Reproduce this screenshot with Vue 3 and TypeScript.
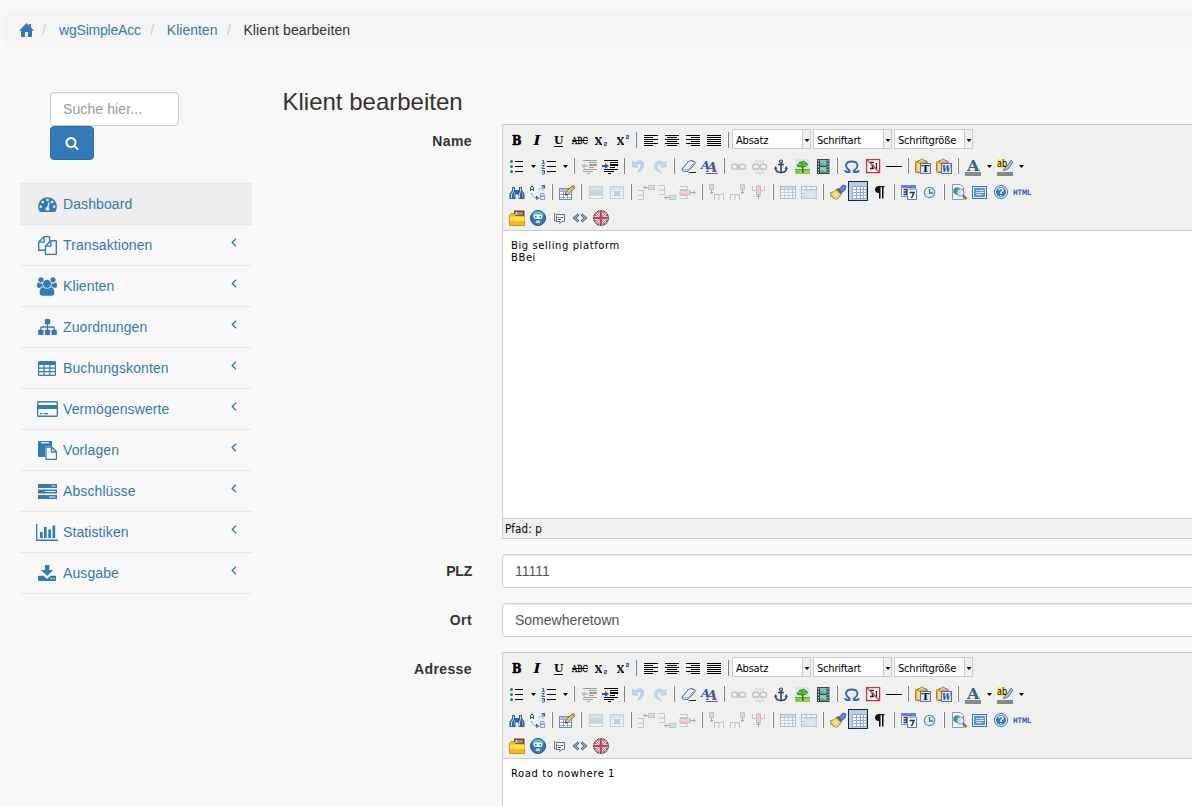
<script setup lang="ts">
type ToolKind = 'button' | 'split' | 'separator' | 'list'

interface Tool {
  kind: ToolKind
  icon: string
  label: string
  active: boolean
}

interface MenuItem {
  label: string
  icon: string
  viewBox: string
  width: number
  height: number
}

const lines = (rows: number[][], fill = '#000'): string =>
  rows.map(([x, y, w]) => `<rect x="${x}" y="${y}" width="${w}" height="1" fill="${fill}"/>`).join('')

const glyph = (text: string, x: number, y: number, size: number, extra = ''): string =>
  `<text x="${x}" y="${y}" font-size="${size}" font-family="DejaVu Serif, serif" font-weight="700" ${extra}>${text}</text>`

const stretched = (width: number): string => `textLength="${width}" lengthAdjust="spacingAndGlyphs"`

const cross = (x: number): string =>
  `<path d="M${x} 8.500h2.500M${x + 4.500} 8.500h2.500M${x} 15.500h2.500M${x + 4.500} 15.500h2.500" stroke="#111"/><path d="M${x + 1} 8.500l5 7" stroke="#111" stroke-width="2"/><path d="M${x + 6} 8.500l-5 7" stroke="#333" stroke-width="1.200"/>`

const smallTwo = (x: number, y: number): string =>
  `<path d="M${x} ${y + 0.5}h2.500v1.500h-2v1.500h2.500" fill="none" stroke="#3a66c8" stroke-width="1.100"/>`

const tableGrid = (x: number, y: number, w: number, h: number): string =>
  `<g shape-rendering="crispEdges"><rect x="${x + 0.5}" y="${y + 0.5}" width="${w - 1}" height="${h - 1}" fill="#fff" stroke="#6f8cb8"/><rect x="${x + 1}" y="${y + 1}" width="${w - 2}" height="2" fill="#b7cbe8"/><path d="M${x + 4.5} ${y + 1}v${h - 2}M${x + 8.5} ${y + 1}v${h - 2}M${x + 1} ${y + 3.5}h${w - 2}M${x + 1} ${y + 6.5}h${w - 2}M${x + 1} ${y + 9.5}h${w - 2}" stroke="#93abd2" fill="none"/></g>`

const clipboard = '<rect x="3.500" y="6.500" width="12" height="11" rx="1" fill="#dfb24d" stroke="#a97d2a"/><path d="M5 8h3v8H5z" fill="#f6d98d"/><path d="M6 8V5.500h2L9 4h2l1 1.500h2V8z" fill="#e8c56d" stroke="#8c6a2b" stroke-width=".7"/><rect x="8.500" y="8.500" width="10" height="10" fill="#dfe8fb" stroke="#5b6f9c"/>'

const chain = '<g fill="none" stroke="#8f98a8" stroke-width="1.600"><rect x="3.700" y="9.200" width="6.500" height="5" rx="2.200"/><rect x="11" y="9.200" width="6.500" height="5" rx="2.200"/>'

const indentLines = lines([[5, 5, 14], [11, 7, 8], [11, 9, 8], [11, 10, 8], [11, 12, 5], [5, 14, 14], [5, 16, 10], [9, 18, 3]])

const icons: Record<string, string> = {
  bold: glyph('B', 6, 16, 12, `${stretched(9.5)} stroke="#000" stroke-width=".5"`),
  italic: glyph('I', 6.5, 16, 12, `${stretched(7)} font-style="italic"`),
  underline: glyph('U', 6, 15, 11, stretched(9.5)) + lines([[6, 17, 9]]),
  strike: glyph('ABC', 3, 15, 9.5, `${stretched(16)} style="font-weight:400" stroke="#000" stroke-width=".3"`) + lines([[3, 11, 16]]),
  sub: cross(5) + smallTwo(14, 13),
  sup: cross(6) + smallTwo(15, 6),
  left: lines([[4, 6, 14], [4, 8, 9], [4, 10, 14], [4, 12, 9], [4, 14, 14], [4, 16, 9]]),
  center: lines([[4, 6, 14], [6, 8, 10], [4, 10, 14], [6, 12, 10], [4, 14, 14], [6, 16, 10]]),
  right: lines([[4, 6, 14], [9, 8, 9], [4, 10, 14], [9, 12, 9], [4, 14, 14], [9, 16, 9]]),
  full: lines([[4, 6, 14], [4, 8, 14], [4, 10, 14], [4, 12, 14], [4, 14, 14], [4, 16, 14]]),
  bullets: '<g fill="#3c64a8"><circle cx="5.500" cy="6.500" r="1.500"/><circle cx="5.500" cy="11.500" r="1.500"/><circle cx="5.500" cy="16.500" r="1.500"/></g>' + lines([[9, 6, 8], [9, 11, 8], [9, 16, 8]]),
  numbers: '<path d="M4 5.500h1.500V8M4 8.500h3M4 10.500h2.500L4 13.500h3M4 15.500h2.500v3.500H4M4.500 17h2" fill="none" stroke="#3a66b8"/>' + lines([[9, 6, 9], [9, 11, 9], [9, 16, 9]]),
  outdent: `<g opacity=".35">${indentLines}<path d="M3 11l4-3v2h3v2H7v2z" fill="#3a76e0"/></g>`,
  indent: indentLines + '<path d="M10 11L6 8v2H3v2h3v2z" fill="#2c5cc0"/>',
  undo: '<path d="M4.500 6v6h5.500l-2-2c3-3 7 0 4 3l-2.500 4.500C18 14 17 4.500 10.500 6Q8.500 6.500 6.700 8z" fill="#bdcee9" stroke="#a8bde0" stroke-width=".6"/>',
  redo: '<path d="M17 6v6h-5.500l2-2c-4-2.500-8 1-3 6l2 1.500C4 16 3 8 9.500 6.200Q12.500 5.700 15 8z" fill="#c6d5ee" stroke="#a8bde0" stroke-width=".6"/>',
  eraser: '<path d="M4 14l6.500-7.500q1-1 2.500-.8l3.500.8q1.500.7.500 2L11 15.500q-1 1-2.500 1l-3-.3Q3.500 16 4 14z" fill="#f4f8ff" stroke="#41608f"/><path d="M4.500 14l5.500.8 6.500-7.500M10 14.800l-.5 1.500" fill="none" stroke="#7d99c4" stroke-width=".8"/>' + lines([[11, 17, 7]], '#222'),
  styles: glyph('A', 2, 14, 11, `${stretched(9)} font-style="italic" fill="#2a5db0"`) + glyph('A', 7.5, 17, 13, `${stretched(11)} font-style="italic" fill="#3c5fa8"`) + lines([[7, 18, 12]], '#9a3fa5'),
  link: `<g opacity=".5">${chain}<path d="M8 11.700h5"/></g></g>`,
  unlink: `<g opacity=".5">${chain}<path d="M7 5l2 3M11 4v3M15 5l-2 3M7 19l2-3M11 20v-3M15 19l-2-3" stroke-width="1"/></g></g>`,
  anchor: '<g fill="none" stroke="#27466f" stroke-width="1.600"><circle cx="11" cy="6.500" r="1.500" stroke-width="1.200"/><path d="M11 8v9.500M8 9.500h6M5.500 13q0 4.500 5.500 4.500t5.500-4.500"/></g><path d="M4.300 14l1-3 2.300 2.500zM17.700 14l-1-3-2.300 2.500z" fill="#27466f"/>',
  image: '<rect x="4" y="4" width="15" height="15" fill="#c9ebfb"/><rect x="4" y="14" width="15" height="5" fill="#8ed24b"/><path d="M4 14.500h15M5 17h4" stroke="#5aa72d"/><path d="M11 18v-6h1.500v6z" fill="#7a4319"/><path d="M6.500 11.500q-1-2.500 1.500-2.500 0-3 2.500-2 3-2 3.500.5 2.500 0 2.500 2.500-1 2.500-3.500 1.500-2.500 2-4 0-2 1-2.500 0z" fill="#4ea426" stroke="#2b7914" stroke-width=".6"/><path d="M8 9h2v1H8zM12 7.500h1.500v1H12zM13.500 10h2v1h-2z" fill="#b3e65b"/>',
  media: '<rect x="5" y="4" width="12.500" height="15" fill="#37424b"/><path d="M6.500 5v13M16 5v13" stroke="#dfe4e8" stroke-dasharray="1.500 1.500"/><rect x="8" y="5" width="6.500" height="6" fill="#7fbde8"/><rect x="8" y="12" width="6.500" height="6" fill="#8ac5e8"/><path d="M8 9q2-2 3.500 0t3-1v3H8zM8 16q2-2 3.500 0t3-1v3H8z" fill="#5fb04a"/>',
  omega: '<path d="M4.500 17h4v-1.500C2.500 11 5 6.500 10.700 6.500S19 11 13 15.500V17h4.500M4.500 17v-2M17.500 17v-2" fill="none" stroke="#3666b5" stroke-width="1.900"/>',
  nonbreaking: '<rect x="4.600" y="4.600" width="13" height="13" fill="#fff" stroke="#bd3844" stroke-width="1.300"/><path d="M8 7.500h4M8 13.500h4M14.500 8v5.500H13M9.500 11h3M10.500 9.300v3.400" fill="none" stroke="#222" stroke-width="1.300"/><path d="M5 5l12 12" stroke="#d7404a" stroke-width="1.100"/>',
  rule: lines([[3, 11, 16]]),
  pastetext: clipboard + glyph('T', 9.5, 17, 9.5, `${stretched(8)} fill="#14161c"`),
  pasteword: clipboard + glyph('W', 9, 17, 8.5, `${stretched(9)} font-style="italic" fill="#2352b0"`),
  forecolor: glyph('A', 5, 16, 14, `${stretched(12.5)} fill="#3b5d96"`) + '<rect x="3" y="17" width="16" height="4" fill="#888"/>',
  backcolor: '<rect x="3" y="4" width="9" height="9" fill="#f3ef60"/><text x="3" y="12" font-size="10" font-family="DejaVu Sans, sans-serif" textLength="10" lengthAdjust="spacingAndGlyphs">ab</text><path d="M9 15l3.500-3.500L17 5.500l2 1.500-5 7-3.500 1.500z" fill="#a9c1e4" stroke="#4d6897" stroke-width=".9"/><rect x="3" y="17" width="16" height="4" fill="#888"/>',
  search: '<path d="M6 6h3v3h4V6h3v3l2.500 4v5h-6v-4.500h-3V18h-6v-5L6 9z" fill="#34619f"/><path d="M7.500 7v3l-2 3v4M14.500 7v3l-1 3v4" fill="none" stroke="#bcd4f4"/><path d="M8.500 11v5M16.500 12v4" stroke="#7fa4d8"/>',
  replace: '<path d="M3.500 10V7l1.500-2.500L6.500 7v3M4 8.500h3" fill="none" stroke="#34507a"/><path d="M13.500 12.500H17v2.700h-3.500 4v3.300h-4z" fill="none" stroke="#76a0eb"/><path d="M4.500 12.500q.5 4 5 4.500M12 8.500q2-1 4-2.500v4" fill="none" stroke="#2e66d4" stroke-dasharray="1.500 1.300"/><path d="M9 14.500l3.500 2.500L9 19zM14 4h4v4z" fill="#2e66d4"/>',
  table: tableGrid(3, 7, 13, 12) + '<path d="M9 14l1-3 6-6 2.500 2-6.500 6.500z" fill="#f0c75e" stroke="#6d4e29" stroke-width=".8"/><path d="M15.500 5.500l1.500-1.500 2.300 1.700L18 7.500z" fill="#d27164"/><path d="M9 14.500l1-2 1.300 1.200z" fill="#222"/>',
  rowprops: '<g opacity=".3"><rect x="4.500" y="5.500" width="13" height="12" fill="#fff" stroke="#7188ae"/><path d="M5 6h12v3H5z" fill="#a4bde5"/><path d="M5 10h12v4H5z" fill="#6f96d8"/><path d="M5 9.500h12M5 14.500h12" stroke="#8ca4c9"/></g>',
  cellprops: '<g opacity=".3"><rect x="4.500" y="5.500" width="13" height="12" fill="#fff" stroke="#7188ae"/><path d="M5 6h12v3H5z" fill="#a4bde5"/><path d="M8.500 9v9M13.500 9v9M5 10.500h12M5 14.500h12" stroke="#a9bbd8"/><path d="M8 10h6v5H8z" fill="#4f7fd0"/></g>',
  rowbefore: '<g opacity=".42" fill="#f3f6fc" stroke="#7589a8"><path d="M3 9.500h5.500v9H3M3 14h5.500"/><rect x="13.500" y="4.500" width="6" height="4" fill="#a8c0ea"/><path d="M8 6.500h5M10 4.500v4" stroke="#555"/></g>',
  rowafter: '<g opacity=".42" fill="#f3f6fc" stroke="#7589a8"><path d="M3 4.500h5.500v9H3M3 9h5.500"/><rect x="13.500" y="14.500" width="6" height="4" fill="#a8c0ea"/><path d="M8 16.500h5M10 14.500v4" stroke="#555"/></g>',
  delrow: '<g opacity=".4" fill="#f3f6fc" stroke="#7589a8"><path d="M3 5.500h7.500v3H3M3 14.500h7.500v3H3"/><path d="M3 9.500h10.500v4H3z" fill="#eea2a2" stroke="#ba6060"/><path d="M13 11.500h5M16 9.500l2.500 2-2.500 2" stroke="#444" fill="none"/></g>',
  colbefore: '<g opacity=".42" fill="#f3f6fc" stroke="#7589a8"><rect x="3.500" y="3.500" width="4" height="5" fill="#a8c0ea"/><path d="M5.500 9v4M4 11.500h3" stroke="#444"/><path d="M8.500 19v-5.500h9V19M13 14v5"/></g>',
  colafter: '<g opacity=".42" fill="#f3f6fc" stroke="#7589a8"><rect x="13.500" y="3.500" width="4" height="5" fill="#a8c0ea"/><path d="M15.500 9v4M14 11.500h3" stroke="#444"/><path d="M3.500 19v-5.500h9V19M8 14v5"/></g>',
  delcol: '<g opacity=".42" fill="#f3f6fc" stroke="#7589a8"><path d="M4.500 5v4.500h12V5"/><path d="M8.500 5v8.500h4V5z" fill="#eaa3a3" stroke="#ba6060"/><path d="M10.500 13v5M8.500 15.500h4" stroke="#444"/></g>',
  splitcells: `<g opacity=".5">${tableGrid(3, 5, 16, 13)}<path d="M15.500 6v11" stroke="#7c98c4"/></g>`,
  mergecells: '<g opacity=".5"><rect x="3.500" y="5.500" width="15" height="12" fill="#fff" stroke="#6f8cb8"/><path d="M4 8.500h14M8.500 6v3M13.500 6v3M4 12.500h3M4 15.500h3" stroke="#7c98c4"/><path d="M6.500 9.500H18v7.500H6.500z" fill="#cbdcf5" stroke="#a6bde4"/></g>',
  cleanup: '<path d="M12 8l4-4 3 1-1 4-3.500 2.500z" fill="#648bcd" stroke="#334f87" stroke-width=".8"/><path d="M11 7l4.500 4.500-1.500 2-5-5z" fill="#6d604d"/><path d="M3.500 11.500Q7 11.500 9 8.500l5 5Q12.500 16.500 9.500 18.500 8 18 7.500 17l-1 .5-1-2-1.500.2z" fill="#ead873" stroke="#8a7432" stroke-width=".8"/><path d="M6 13.500l3-2M8 16l2.500-3" stroke="#fff6bb"/>',
  visualaid: '<g shape-rendering="crispEdges"><rect x="4" y="5" width="15" height="13" fill="#fff"/><path d="M4.500 5.500h14v12h-14zM5 8.500h13M5 11.500h13M5 14.500h13M8.500 6v11M12.500 6v11M15.500 6v11" fill="none" stroke="#93aad0"/></g>',
  visualchars: '<path d="M15.500 5v1.300h-1V17.500H13V6.300h-1.500v11.200H10V12C4.500 12 5 5 10 5z" fill="#080808"/>',
  date: '<rect x="3.500" y="4.500" width="10" height="11" fill="#f8fbff" stroke="#7793c5"/><path d="M3 4h15v3H3z" fill="#5b86cf"/><path d="M5.500 8.500h3v5h-3M5.500 11h3" fill="none" stroke="#273d65" stroke-width="1.300"/><rect x="9.500" y="7.500" width="9" height="11" fill="#f8fbff" stroke="#6a84b0"/><path d="M9 7h10v2H9z" fill="#9db9e4"/><path d="M11.500 11.500h4.500l-2.500 5.500" fill="none" stroke="#252c3a" stroke-width="1.500"/>',
  time: '<circle cx="10.500" cy="11.500" r="5.200" fill="#dbe8fa" stroke="#6788bd" stroke-width="1.200"/><circle cx="9.500" cy="10" r="2.800" fill="#fff"/><path d="M10.500 8v4H14" fill="none" stroke="#3762a8" stroke-width="1.300"/>',
  preview: '<path d="M4.500 3.500h8l3 3v12h-11z" fill="#f5faff" stroke="#8299bb"/><circle cx="9" cy="10" r="3.700" fill="#469ec0"/><path d="M6 9q1-3 4-2l-2 3 1 3q-3 0-3-4z" fill="#3c9a48"/><circle cx="12.500" cy="11.500" r="3.700" fill="#d8e9f9" fill-opacity=".85" stroke="#7f8a9c"/><path d="M15 14.500l3.500 3.500" stroke="#a66e35" stroke-width="2.500"/>',
  fullscreen: '<rect x="3.500" y="5.500" width="14" height="12" fill="#e6effc" stroke="#426fb1"/><rect x="5" y="7" width="11" height="9" fill="#5f92e3"/><path d="M7 9.500h2M10 9.500h5M7 11.500h8M7 13.500h6" stroke="#d7e6fb"/>',
  help: '<circle cx="11" cy="11" r="6.500" fill="#edf4ff" stroke="#3d6cb5"/><circle cx="11" cy="11" r="5" fill="#3974d1"/><path d="M9 9.300Q9 7.500 11 7.500t2 1.800q0 1-2 2V13M11 14v1.300" fill="none" stroke="#fff" stroke-width="1.400"/>',
  html: '<text x="2" y="14" font-size="7.500" font-family="DejaVu Sans, sans-serif" font-weight="700" textLength="18" lengthAdjust="spacingAndGlyphs" fill="#315fae">HTML</text>',
  folder: '<path d="M8 3.500h10.500V11H8z" fill="#4e4c4a"/><path d="M12 5h5v3h-5z" fill="#c97a68"/><path d="M9.500 5h2v3h-2z" fill="#ddd"/><path d="M3.500 8.500l1.500-2h3.500l1 2.500h9v9.500h-15z" fill="#f3b91e" stroke="#bd7608" stroke-width=".7"/><path d="M4 9.500h14.500V14H4z" fill="#ffe149"/>',
  smiley: '<circle cx="11" cy="11" r="7.500" fill="#2e78b4" stroke="#254f7b"/><ellipse cx="11" cy="7.500" rx="5.500" ry="3.500" fill="#7fc4e9" opacity=".75"/><rect x="6.500" y="7.500" width="9" height="4.500" rx="2.200" fill="#f4fbff"/><path d="M8 9.800h1.500M12.500 9.800H14" stroke="#1d364d" stroke-width="1.300"/><ellipse cx="11" cy="14.700" rx="2.500" ry="1.500" fill="#a9dcf3"/>',
  quote: '<path d="M6.500 6v8H8M8.500 7.500h8v7H14l-2 2v-2H8.500z" fill="#f8fafc" stroke="#61728a"/><path d="M9.500 10.500h2M12.500 10.500h2.500M10 12.500h3" stroke="#555"/>',
  code: '<path d="M9.500 7.500L5.500 11l4 3.500M12.500 7.500l4 3.500-4 3.500" fill="none" stroke="#3e5f96" stroke-width="2.600"/><path d="M9.500 7.500L5.500 11l4 3.500M12.500 7.500l4 3.500-4 3.500" fill="none" stroke="#b4d0f2" stroke-width="1"/>',
  flag: '<circle cx="11" cy="11" r="7.800" fill="#28529b"/><path d="M5.500 5.500l11 11M16.500 5.500l-11 11" stroke="#eef0f5" stroke-width="2.700"/><path d="M5.500 5.500l11 11M16.500 5.500l-11 11" stroke="#cf4650"/><path d="M11 3.200v15.600M3.200 11h15.600" stroke="#f4eeee" stroke-width="4.600"/><path d="M11 3.200v15.600M3.200 11h15.600" stroke="#d33f48" stroke-width="2.600"/><circle cx="11" cy="11" r="7.500" fill="none" stroke="#6d4060" opacity=".6"/>',
}

/* "|" is a separator, ">" opens a drop-down, "#" a list box, "*" a pressed button */
const parse = (row: string): Tool[] =>
  row.split(' ').map((token) => {
    if (token === '|') return { kind: 'separator', icon: '', label: '', active: false }
    if (token.startsWith('#')) return { kind: 'list', icon: '', label: token.slice(1), active: false }
    const kind: ToolKind = token.endsWith('>') ? 'split' : 'button'
    return { kind, icon: token.replace(/[>*]/g, ''), label: '', active: token.endsWith('*') }
  })

const toolbar: Tool[][] = [
  'bold italic underline strike sub sup | left center right full | #Absatz #Schriftart #Schriftgröße',
  'bullets> numbers> | outdent indent | undo redo | eraser styles | link unlink anchor image media | omega nonbreaking rule | pastetext pasteword | forecolor> backcolor>',
  'search replace | table | rowprops cellprops | rowbefore rowafter delrow | colbefore colafter delcol | splitcells mergecells | cleanup visualaid* visualchars | date time | preview fullscreen help html',
  'folder smiley quote code flag',
].map(parse)

const crumbs = ['wgSimpleAcc', 'Klienten', 'Klient bearbeiten']

const searchIcon =
  'M1216 832q0-185-131.500-316.500t-316.500-131.500-316.500 131.500-131.500 316.500 131.500 316.500 316.500 131.500 316.500-131.500 131.500-316.500zm512 832q0 52-38 90t-90 38q-54 0-90-38l-343-342q-179 124-399 124-143 0-273.500-55.500t-225-150-150-225-55.500-273.500 55.500-273.500 150-225 225-150 273.500-55.500 273.500 55.500 225 150 150 225 55.500 273.500q0 220-124 399l343 343q37 37 37 90z'

const menu: MenuItem[] = [
  {
    label: 'Dashboard', viewBox: '0 128 1792 1536', width: 19, height: 16,
    icon: '<path d="M384 1152q0-53-37.500-90.500t-90.500-37.500-90.500 37.500-37.500 90.500 37.500 90.500 90.500 37.500 90.500-37.500 37.500-90.500zm192-448q0-53-37.500-90.500t-90.500-37.500-90.500 37.500-37.500 90.500 37.500 90.500 90.500 37.500 90.500-37.500 37.500-90.500zm428 481l101-382q6-26-7.500-48.500t-38.500-29.500-48 6.500-30 39.500l-101 382q-60 5-107 43.500t-63 98.500q-20 77 20 146t117 89 146-20 89-117q16-60-6-117t-72-91zm660-33q0-53-37.500-90.500t-90.500-37.500-90.500 37.500-37.500 90.500 37.500 90.500 90.500 37.500 90.500-37.500 37.500-90.500zm-640-640q0-53-37.500-90.500t-90.500-37.500-90.500 37.500-37.500 90.500 37.500 90.500 90.500 37.500 90.500-37.500 37.500-90.500zm448 192q0-53-37.500-90.500t-90.500-37.500-90.500 37.500-37.500 90.500 37.500 90.500 90.500 37.500 90.500-37.500 37.500-90.500zm320 448q0 261-141 483-19 29-54 29h-1402q-35 0-54-29-141-221-141-483 0-182 71-348t191-286 286-191 348-71 348 71 286 191 191 286 71 348z"/>',
  },
  {
    label: 'Transaktionen', viewBox: '0 0 1792 1792', width: 19, height: 19,
    icon: '<path d="M1696 384q40 0 68 28t28 68v1216q0 40-28 68t-68 28h-960q-40 0-68-28t-28-68v-288h-544q-40 0-68-28t-28-68v-672q0-40 20-88t48-76l408-408q28-28 76-48t88-20h416q40 0 68 28t28 68v328q68-40 128-40h416zm-544 213l-299 299h299v-299zm-640-384l-299 299h299v-299zm196 647l316-316v-416h-384v416q0 40-28 68t-68 28h-416v640h512v-256q0-40 20-88t48-76zm956 804v-1152h-384v416q0 40-28 68t-68 28h-416v640h896z"/>',
  },
  {
    label: 'Klienten', viewBox: '0 0 1920 1792', width: 20, height: 19,
    icon: '<path d="M593 896q-162 5-265 128h-134q-82 0-138-40.500t-56-118.500q0-353 124-353 6 0 43.500 21t97.500 42.500 119 21.500q67 0 133-23-5 37-5 66 0 139 81 256zm1071 637q0 120-73 189.500t-194 69.500h-874q-121 0-194-69.500t-73-189.500q0-53 3.500-103.500t14-109 26.500-108.500 43-97.500 62-81 85.500-53.500 111.500-20q10 0 43 21.500t73 48 107 48 135 21.500 135-21.500 107-48 73-48 43-21.500q61 0 111.500 20t85.500 53.500 62 81 43 97.500 26.500 108.500 14 109 3.500 103.500zm-1024-1277q0 106-75 181t-181 75-181-75-75-181 75-181 181-75 181 75 75 181zm704 384q0 159-112.500 271.500t-271.500 112.500-271.500-112.500-112.500-271.500 112.500-271.500 271.500-112.500 271.500 112.500 112.500 271.500zm576 225q0 78-56 118.500t-138 40.500h-134q-103-123-265-128 81-117 81-256 0-29-5-66 66 23 133 23 59 0 119-21.500t97.500-42.500 43.500-21q124 0 124 353zm-128-609q0 106-75 181t-181 75-181-75-75-181 75-181 181-75 181 75 75 181z"/>',
  },
  {
    label: 'Zuordnungen', viewBox: '0 128 1792 1536', width: 19, height: 16,
    icon: '<path d="M1792 1248v320q0 40-28 68t-68 28h-320q-40 0-68-28t-28-68v-320q0-40 28-68t68-28h96v-192h-512v192h96q40 0 68 28t28 68v320q0 40-28 68t-68 28h-320q-40 0-68-28t-28-68v-320q0-40 28-68t68-28h96v-192h-512v192h96q40 0 68 28t28 68v320q0 40-28 68t-68 28h-320q-40 0-68-28t-28-68v-320q0-40 28-68t68-28h96v-192q0-52 38-90t90-38h512v-192h-96q-40 0-68-28t-28-68v-320q0-40 28-68t68-28h320q40 0 68 28t28 68v320q0 40-28 68t-68 28h-96v192h512q52 0 90 38t38 90v192h96q40 0 68 28t28 68z"/>',
  },
  {
    label: 'Buchungskonten', viewBox: '0 0 18 15', width: 18, height: 15,
    icon: '<path fill-rule="evenodd" d="M1.500 0h15Q18 0 18 1.500v12q0 1.500-1.500 1.500h-15Q0 15 0 13.500v-12Q0 0 1.500 0zM1.200 4v2.500h4.300V4zm5.500 0v2.500h4.500V4zm5.700 0v2.500h4.400V4zM1.200 7.700v2.400h4.300V7.700zm5.500 0v2.400h4.500V7.700zm5.700 0v2.400h4.400V7.700zM1.200 11.300v2.500h4.300v-2.500zm5.500 0v2.500h4.500v-2.500zm5.700 0v2.500h4.400v-2.500z"/>',
  },
  {
    label: 'Vermögenswerte', viewBox: '0 0 21 16', width: 21, height: 16,
    icon: '<path fill-rule="evenodd" d="M1.700 0h17.600Q21 0 21 1.700v12.600q0 1.700-1.700 1.700H1.700Q0 16 0 14.300V1.700Q0 0 1.700 0zM1.300 1.500v2.500h18.400V1.500zM1.300 8v6.600h18.400V8zM3 12h2.500v1.300H3zm4 0h4v1.300H7z"/>',
  },
  {
    label: 'Vorlagen', viewBox: '0 0 19 19', width: 19, height: 19,
    icon: '<path d="M0 1q0-1 1-1h12q1 0 1 1v4H9Q7 5 7 7v9H1q-1 0-1-1z"/><path d="M3 1.700h8" stroke="#f8f8f8" stroke-width="1.300"/><path d="M8 6h5.500l5 5v7.300H8zM13.500 6v5h5" fill="#f8f8f8" stroke="#337ab7" stroke-width="1.300"/>',
  },
  {
    label: 'Abschlüsse', viewBox: '0 0 19 15', width: 19, height: 15,
    icon: '<path d="M0 0h19v4H0zM0 5.500h19v4H0zM0 11h19v4H0z"/><path d="M13.500 2h4M7 7.500h10.500M11 13h6.500" stroke="#f8f8f8" stroke-width="1.200"/>',
  },
  {
    label: 'Statistiken', viewBox: '0 0 22 17', width: 22, height: 17,
    icon: '<path d="M0 0h1.300v15.500H22V17H0zM4 8h2.700v6H4zM8 3h2.700v11H8zM12.300 5.500H15V14h-2.700zM16.500 1.500h2.700V14h-2.700z"/>',
  },
  {
    label: 'Ausgabe', viewBox: '0 0 18 17', width: 18, height: 17,
    icon: '<path d="M7 0h4.300v5h3.900L9.100 11 3 5h4z"/><path fill-rule="evenodd" d="M0 11.500q0-.7.800-.7h4.700L9.100 14l3.600-3.200h4.500q.8 0 .8.700V15q0 1-1 1H1q-1 0-1-1zM12.500 13v1.300h1.300V13zm2.700 0v1.300h1.300V13z"/>',
  },
]
</script>

<template>
  <div class="page">
    <nav class="breadcrumb">
      <a class="home" href="#">
        <svg width="15" height="14" viewBox="0 0 15 14"><path d="M7.500 0L10 2.500V1h2v3.500L15 7.700H13V14H9V9H6v5H2V7.700H0z" fill="#337ab7" /></svg>
      </a>
      <template v-for="(crumb, i) in crumbs" :key="crumb">
        <span class="slash">/</span>
        <a v-if="i < 2" href="#" :class="{ module: i === 0 }">{{ crumb }}</a>
        <span v-else class="current">{{ crumb }}</span>
      </template>
    </nav>

    <div class="columns">
      <aside class="sidebar">
        <form class="search">
          <input class="control" type="text" placeholder="Suche hier..." />
          <button type="button">
            <svg width="14" height="14" viewBox="0 0 1792 1792"><path :d="searchIcon" fill="#fff" /></svg>
          </button>
        </form>
        <ul class="menu">
          <li v-for="(item, i) in menu" :key="item.label" :class="{ active: i === 0 }">
            <a href="#">
              <span class="menu-icon">
                <svg :width="item.width" :height="item.height" :viewBox="item.viewBox" fill="#337ab7" v-html="item.icon" />
              </span>
              <span class="menu-label">{{ item.label }}</span>
              <svg v-if="i > 0" class="chevron" width="6" height="9" viewBox="0 0 6 9"><path d="M5 .8L1.200 4.500 5 8.200" fill="none" stroke="#337ab7" stroke-width="1.300" /></svg>
            </a>
          </li>
        </ul>
      </aside>

      <main class="content">
        <h3>Klient bearbeiten</h3>
        <div v-for="field in ['Name', 'PLZ', 'Ort', 'Adresse']" :key="field" class="field">
          <label :class="{ short: field === 'PLZ' }">{{ field }}</label>
          <input v-if="field === 'PLZ'" class="control" type="text" value="11111" />
          <input v-else-if="field === 'Ort'" class="control" type="text" value="Somewheretown" />
          <div v-else class="editor">
            <div class="toolbar">
              <div v-for="(row, r) in toolbar" :key="r" class="tool-row">
                <template v-for="(tool, t) in row" :key="t">
                  <span v-if="tool.kind === 'separator'" class="separator"></span>
                  <span v-else-if="tool.kind === 'list'" class="list">
                    <span class="list-text">{{ tool.label }}</span>
                    <span class="list-arrow"><i class="caret"></i></span>
                  </span>
                  <template v-else>
                    <span class="tool" :class="{ pressed: tool.active }">
                      <svg width="20" height="21" viewBox="0 0 20 21" v-html="icons[tool.icon]" />
                    </span>
                    <span v-if="tool.kind === 'split'" class="drop"><i class="caret"></i></span>
                  </template>
                </template>
              </div>
            </div>
            <div class="document">
              <template v-if="field === 'Name'">Big selling platform<br />BBei</template>
              <template v-else>Road to nowhere 1</template>
            </div>
            <div v-if="field === 'Name'" class="status">Pfad: p</div>
          </div>
        </div>
      </main>
    </div>
  </div>
</template>

<style>
body {
  margin: 0;
  background: #f8f8f8;
}
</style>

<style scoped>
.page {
  box-sizing: border-box;
  width: 100%;
  height: 806px;
  padding: 12px 0 0 4px;
  overflow: hidden;
  background: #f8f8f8;
  color: #333;
  font: 14px/20px "Liberation Sans", Arial, sans-serif;
}
.page * {
  box-sizing: border-box;
}
a {
  color: #337ab7;
  text-decoration: none;
}
svg {
  display: block;
}
.breadcrumb {
  display: flex;
  align-items: center;
  height: 36px;
  padding-left: 15px;
  border-radius: 4px 0 0 4px;
  background: #f5f5f5;
}
.module {
  letter-spacing: -0.2px;
}
.current {
  letter-spacing: 0.1px;
}
.slash {
  width: 4px;
  margin: 0 12.5px 0 9.5px;
  color: #ccc;
}
.home + .slash {
  margin: 0 13px 0 8px;
}
.columns {
  display: flex;
}
.sidebar {
  flex: none;
  width: 232px;
  margin: 44px 0 0 16px;
}
.search {
  display: flex;
  flex-direction: column;
  align-items: flex-start;
  padding-left: 30px;
}
.control {
  display: block;
  height: 34px;
  padding: 6px 12px;
  border: 1px solid #ccc;
  border-radius: 4px;
  background: #fff;
  box-shadow: inset 0 1px 1px rgba(0, 0, 0, 0.075);
  color: #555;
  font: inherit;
}
.search .control {
  width: 129px;
  letter-spacing: 0.1px;
}
.control::placeholder {
  color: #999;
}
.search button {
  display: flex;
  align-items: center;
  justify-content: center;
  width: 44px;
  height: 34px;
  padding: 0;
  border: 1px solid #2e6da4;
  border-radius: 4px;
  background: #337ab7;
}
.menu {
  margin: 23px 0 0;
  padding: 0;
  border-top: 1px solid #e7e7e7;
  list-style: none;
}
.menu li {
  height: 41px;
  border-bottom: 1px solid #e7e7e7;
}
.menu .active {
  background: #eee;
}
.menu a {
  display: flex;
  align-items: center;
  height: 40px;
  padding: 0 15px;
}
.menu-icon {
  display: flex;
  justify-content: center;
  width: 24px;
  margin-right: 4px;
}
.menu-label {
  flex: 1;
  letter-spacing: 0.1px;
}
.chevron {
  margin: -6px 0 0;
}
.content {
  flex: none;
  width: 940px;
  margin: 41px 0 0 30px;
}
h3 {
  height: 26px;
  margin: 0 0 9px;
  padding-left: 0.5px;
  font-size: 24px;
  font-weight: 400;
  line-height: 26px;
}
.field {
  display: flex;
  margin-bottom: 15px;
}
.field label {
  flex: none;
  width: 190px;
  margin-right: 30px;
  padding-top: 7px;
  font-weight: 700;
  letter-spacing: 0.4px;
  text-align: right;
}
.field .short {
  letter-spacing: -0.2px;
}
.field > .control {
  width: 720px;
}
.editor {
  width: 720px;
  height: 415px;
  border: 1px solid #ccc;
}
.toolbar {
  height: 106px;
  padding: 4px 0 0 3px;
  border-bottom: 1px solid #ccc;
  background: #f0f0ee;
}
.tool-row {
  display: flex;
  height: 20px;
  margin-bottom: 6px;
}
.tool {
  flex: none;
  width: 20px;
  height: 20px;
  margin-right: 1px;
}
.tool svg {
  overflow: visible;
}
.pressed {
  border: 1px solid #0a246a;
  background: #c2cbe0;
}
.pressed svg {
  margin: -1px 0 0 -1px;
}
.separator {
  width: 2px;
  height: 16px;
  margin: 3px 3px 0;
  border-left: 1px solid #fff;
  border-right: 1px solid #808088;
}
.drop {
  display: flex;
  justify-content: center;
  width: 11px;
  padding: 10px 0 0 2px;
}
.caret {
  width: 5px;
  height: 3px;
  background: #000;
  clip-path: polygon(0 0, 100% 0, 50% 100%);
}
.list {
  display: flex;
  flex: none;
  width: 79px;
  height: 20px;
  margin-right: 2px;
  border: 1px solid #ccc;
  background: #fff;
}
.list-text {
  width: 69px;
  padding: 2px 0 0 3px;
  color: #000;
  font: 11px/18px "DejaVu Sans Condensed", "DejaVu Sans", sans-serif;
  font-stretch: condensed;
  letter-spacing: -0.2px;
  white-space: nowrap;
}
.list-arrow {
  display: flex;
  justify-content: center;
  flex: 1;
  padding: 9px 0 0 1px;
  border-left: 1px solid #ccc;
  background: #f0f0ee;
}
.document {
  height: 287px;
  padding: 9px 8px 8px;
  background: #fff;
  color: #000;
  font: 10px/12px "DejaVu Sans", Verdana, sans-serif;
  letter-spacing: 0.58px;
}
.status {
  height: 20px;
  padding-left: 2px;
  border-top: 1px solid #ccc;
  background: #f0f0ee;
  color: #000;
  font: 11.5px/21px "DejaVu Sans Condensed", "DejaVu Sans", sans-serif;
  font-stretch: condensed;
  letter-spacing: 0.1px;
}
</style>
